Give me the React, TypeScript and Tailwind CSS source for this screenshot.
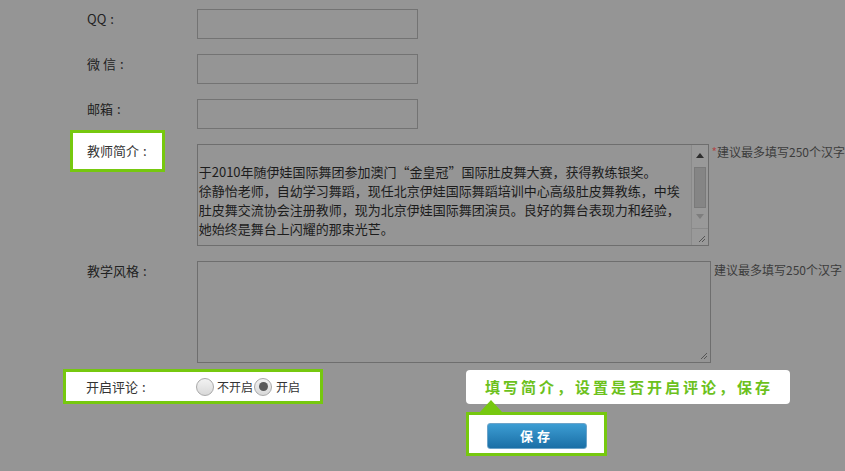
import React from "react";

const FONT = { fontFamily: '"Noto Sans CJK SC", "Microsoft YaHei", sans-serif' };

const introLines = [
  "于2010年随伊娃国际舞团参加澳门“金皇冠”国际肚皮舞大赛，获得教练银奖。",
  "徐静怡老师，自幼学习舞蹈，现任北京伊娃国际舞蹈培训中心高级肚皮舞教练，中埃",
  "肚皮舞交流协会注册教师，现为北京伊娃国际舞团演员。良好的舞台表现力和经验，",
  "她始终是舞台上闪耀的那束光芒。",
];

const Colon = () => <span className="ml-[4px]">:</span>;

// 输入框一行
const InputRow = ({ label }: { label: string }) => (
  <div className="flex items-start">
    <div className="w-[110px] leading-[20px] text-[13px] text-[#222]">
      {label}
      <Colon />
    </div>
    <div className="w-[221px] h-[30px] border border-[#737373]"></div>
  </div>
);

// 右下角的拖拽角
const Grip = () => (
  <svg width="10" height="10" viewBox="0 0 10 10" className="absolute right-[2px] bottom-[2px]">
    <path d="M9 3 L3 9 M9 6 L6 9" stroke="#555" strokeWidth="1" />
  </svg>
);

const Radio = ({ checked }: { checked?: boolean }) => (
  <span className="w-[18px] h-[18px] rounded-full border border-[#a9a9a9] bg-gradient-to-b from-[#f2f2f2] to-[#d9d9d9] flex items-center justify-center">
    {checked && <span className="w-[9px] h-[9px] rounded-full bg-[#5a5a5a]"></span>}
  </span>
);

const App = () => {
  return (
    <div className="w-[845px] h-[471px] bg-[#959595] overflow-hidden" style={FONT}>
      <div className="flex flex-col pt-[9px] pl-[87px] gap-[15px]">
        <InputRow label="QQ" />
        <InputRow label="微 信" />
        <InputRow label="邮箱" />

        {/* 教师简介 */}
        <div className="flex items-start">
          <div className="w-[110px]">
            <div className="-ml-[17px] -mt-[14px] w-[95px] h-[42px] border-[3px] border-[#76c80f] bg-white flex items-center pl-[14px] text-[13px] text-[#333]">
              教师简介
              <Colon />
            </div>
          </div>
          <div className="relative w-[514px] h-[102px] border border-[#6e6e6e] overflow-hidden">
            <div className="pt-[17px] pl-[1px] text-[13px] leading-[19px] text-[#1c1c1c] whitespace-nowrap">
              {introLines.map((l) => (
                <div key={l}>{l}</div>
              ))}
            </div>
            {/* 滚动条 */}
            <div className="absolute right-0 top-0 bottom-0 w-[17px] border-l border-[#8a8a8a] bg-[#999] flex flex-col items-center">
              <svg width="8" height="5" viewBox="0 0 8 5" className="mt-[8px]">
                <path d="M0 5 L4 0 L8 5 Z" fill="#2e2e2e" />
              </svg>
              <div className="mt-[9px] w-[12px] h-[41px] bg-[#858585] border border-[#7a7a7a]"></div>
              <svg width="8" height="5" viewBox="0 0 8 5" className="mt-[6px]">
                <path d="M0 0 L4 5 L8 0 Z" fill="#7e7e7e" />
              </svg>
              <div className="mt-auto w-full h-[17px] border-t border-[#8a8a8a]"></div>
            </div>
            <Grip />
          </div>
          <div className="ml-[2px] text-[12px] leading-[16px] text-[#3c3c3c] whitespace-nowrap">
            <span className="text-[#b04a4a]">*</span>建议最多填写250个汉字
          </div>
        </div>

        {/* 教学风格 */}
        <div className="flex items-start">
          <div className="w-[110px] leading-[20px] text-[13px] text-[#222]">
            教学风格
            <Colon />
          </div>
          <div className="relative w-[514px] h-[102px] border border-[#6e6e6e]">
            <Grip />
          </div>
          <div className="ml-[3px] mt-[1px] text-[12px] leading-[16px] text-[#3c3c3c] whitespace-nowrap">
            建议最多填写250个汉字
          </div>
        </div>
      </div>

      {/* 开启评论 + 提示 */}
      <div className="flex items-start mt-[6px] pl-[63px]">
        <div className="w-[260px] h-[35px] border-[3px] border-[#76c80f] bg-white flex items-center pl-[20px] text-[#333]">
          <span className="w-[110px] text-[13px]">
            开启评论
            <Colon />
          </span>
          <Radio />
          <span className="ml-[3px] text-[12px] mr-[1px]">不开启</span>
          <Radio checked />
          <span className="ml-[4px] text-[12px]">开启</span>
        </div>

        <div className="ml-[143px] mt-[1px] flex flex-col">
          <div className="w-[324px] h-[34px] rounded-[4px] bg-white flex items-center pl-[19px] text-[15px] font-bold tracking-[3px] text-[#6cc11c] whitespace-nowrap">
            填写简介，设置是否开启评论，保存
          </div>
          <div className="-mt-[4px] ml-[14px] w-0 h-0 border-l-[11px] border-r-[11px] border-b-[12px] border-l-transparent border-r-transparent border-b-[#76c80f]"></div>
          <div className="w-[141px] h-[44px] border-[3px] border-[#76c80f] bg-white pl-[18px] pt-[7px]">
            <button className="w-[100px] h-[26px] rounded-[3px] border border-[#6ba3c9] bg-gradient-to-b from-[#3c9dd3] to-[#1a6fa6] text-white text-[13px] font-bold tracking-[4px] leading-[24px]">
              保存
            </button>
          </div>
        </div>
      </div>
    </div>
  );
};

export default App;
